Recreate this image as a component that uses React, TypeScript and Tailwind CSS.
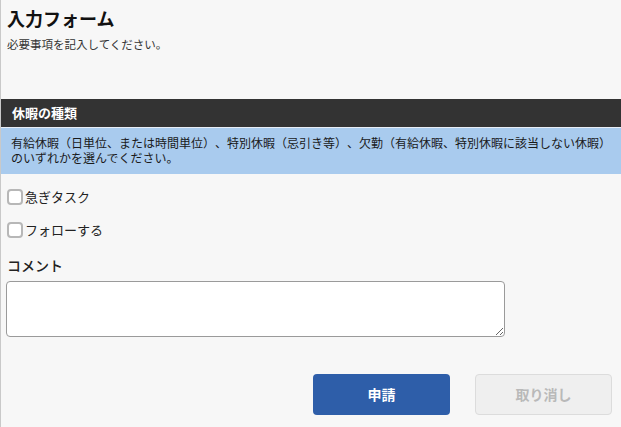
import { useState } from "react"

const font = { fontFamily: '"Noto Sans CJK JP", "Noto Sans", sans-serif' }

function Check({ label }: { label: string }) {
  const [on, setOn] = useState(false)
  return (
    <label className="flex items-center h-4 ml-[6px] cursor-pointer">
      <input
        type="checkbox"
        checked={on}
        onChange={() => setOn(!on)}
        className="appearance-none w-4 h-4 m-0 border-2 border-[#b7b7b7] rounded-[4px] bg-white checked:bg-[#2e5ea9]"
      />
      <span className="ml-[2px] text-[13px] leading-4 text-[#222]">{label}</span>
    </label>
  )
}

export default function App() {
  return (
    <div
      className="min-h-screen bg-[#f7f7f7] border-l border-[#c9c9c9] text-[#222] [text-spacing-trim:space-all]"
      style={font}
    >
      <div className="px-[6px] pt-[7px]">
        <h1 className="text-[18px] leading-[22px] font-bold text-[#111]">入力フォーム</h1>
        <p className="mt-[7px] text-[11.5px] leading-4 text-[#333]">必要事項を記入してください。</p>
      </div>

      <div className="mt-[47px] h-[29px] bg-[#333333] border-b border-[#e8eef6] flex items-center px-[11px]">
        <span className="text-[13px] font-bold text-white">休暇の種類</span>
      </div>
      <div className="h-[46px] bg-[#a9cbee] pt-[7px] px-[10px] text-[12px] leading-[15px] text-[#1a1a1a] whitespace-nowrap">
        <div>有給休暇（日単位、または時間単位）、特別休暇（忌引き等）、欠勤（有給休暇、特別休暇に該当しない休暇）</div>
        <div>のいずれかを選んでください。</div>
      </div>

      <div className="mt-[15px]">
        <Check label="急ぎタスク" />
      </div>
      <div className="mt-[17px]">
        <Check label="フォローする" />
      </div>

      <div className="mt-[17px] px-[6px] text-[14px] leading-5 font-medium text-[#222]">コメント</div>
      <textarea className="block mt-[6px] ml-[5px] w-[499px] h-[56px] bg-white border border-[#9a9a9a] rounded-[4px] outline-none p-1 text-[13px]" />

      <div className="mt-[37px] flex justify-end gap-[25px] pr-[9px]">
        <button className="w-[137px] h-[41px] rounded-[4px] bg-[#2e5ea9] text-white text-[14px] font-bold">
          申請
        </button>
        <button className="w-[137px] h-[41px] rounded-[4px] bg-[#efefef] border border-[#dcdcdc] text-[#b9b9b9] text-[14px] font-bold">
          取り消し
        </button>
      </div>
    </div>
  )
}
